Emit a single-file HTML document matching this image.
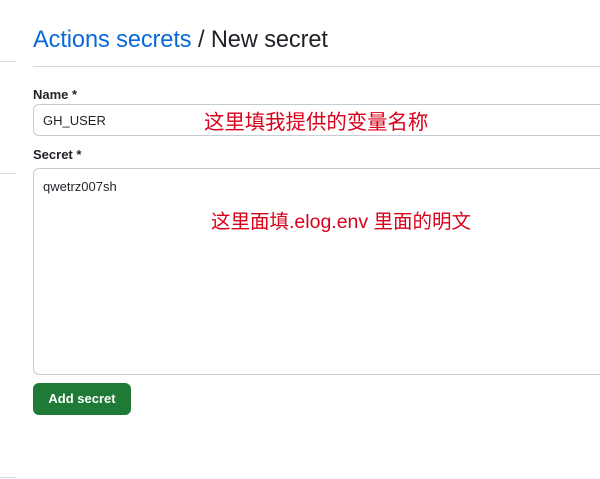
<!DOCTYPE html>
<html><head><meta charset="utf-8"><style>
html,body{margin:0;padding:0;background:#fff;width:600px;height:479px;overflow:hidden;position:relative;font-family:"Liberation Sans","Noto Sans CJK SC",sans-serif;}
.l{position:absolute;left:0;width:16px;height:1px;background:#d8dee4}
h1{position:absolute;left:33px;top:27px;margin:0;font-weight:400;font-size:23.6px;color:#1f2328;letter-spacing:-0.1px}
h1 span{color:#0969da}
.hr{position:absolute;left:33px;right:0;top:66px;height:1px;background:#d0d7de}
.lab{position:absolute;left:33px;font-size:13px;font-weight:700;color:#1f2328}
.in{position:absolute;left:33px;width:600px;border:1px solid #c4ccd5;border-radius:6px;box-sizing:border-box;font-size:13px;color:#1f2328;padding-left:9px}
.red{position:absolute;color:#d9001b;white-space:nowrap}
.btn{position:absolute;left:33px;top:383px;width:98px;height:32px;background:#1f7a35;border-radius:6px;color:#fff;font-size:13px;font-weight:700;text-align:center;line-height:31px;box-sizing:border-box}
</style></head><body>
<div class="l" style="top:61px"></div>
<div class="l" style="top:173px"></div>
<div class="l" style="top:477px"></div>
<h1><span>Actions secrets</span> / New secret</h1>
<div class="hr"></div>
<div class="lab" style="top:87px">Name *</div>
<div class="in" style="top:104px;height:32px;line-height:31px">GH_USER</div>
<div class="red" style="left:204px;top:105px;font-size:20.4px">这里填我提供的变量名称</div>
<div class="lab" style="top:147px">Secret *</div>
<div class="in" style="top:168px;height:207px;padding-top:10px">qwetrz007sh</div>
<div class="red" style="left:211px;top:205px;font-size:19.5px">这里面填.elog.env 里面的明文</div>
<div class="btn">Add secret</div>
</body></html>
